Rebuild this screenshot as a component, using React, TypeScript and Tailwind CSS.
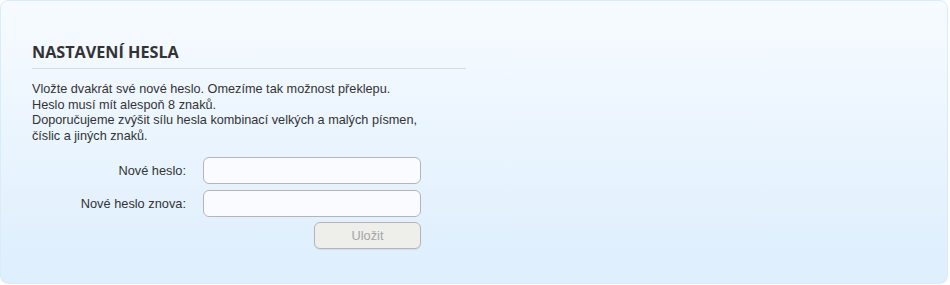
import React from "react";

const Field = ({ label }: { label: string }) => (
  <>
    <label className="self-center text-right text-[12.8px] text-[#333]">{label}</label>
    <input
      type="password"
      className="h-[27px] w-[218px] rounded-[6px] border border-[#b5b5b5] bg-[#f9fbff] px-2 text-[12px] outline-none"
    />
  </>
);

export default function App() {
  return (
    <div className="h-[285px] w-[950px] bg-white" style={{ fontFamily: '"Liberation Sans", Arial, sans-serif' }}>
      <div className="h-[284px] w-[948px] rounded-[8px] border border-[#d9ecfc] bg-gradient-to-b from-[#f7fbff] to-[#ddeefd] pl-[31px] pt-[40px]">
        <div className="w-[434px]">
          <h2
            className="border-b border-[#d9dbdd] pb-[5px] text-[16.2px] font-bold leading-[22px] text-[#333]"
            style={{ fontFamily: '"Open Sans", sans-serif' }}
          >
            NASTAVENÍ HESLA
          </h2>
          <p className="mt-[13px] text-[12.7px] leading-[15.5px] text-[#333]">
            Vložte dvakrát své nové heslo. Omezíme tak možnost překlepu.
            <br />
            Heslo musí mít alespoň 8 znaků.
            <br />
            Doporučujeme zvýšit sílu hesla kombinací velkých a malých písmen,
            <br />
            číslic a jiných znaků.
          </p>
        </div>
        <div className="mt-[13px] grid grid-cols-[154px_218px] gap-x-[17px] gap-y-[6px]">
          <Field label="Nové heslo:" />
          <Field label="Nové heslo znova:" />
          <div />
          <div className="flex justify-end">
            <button
              disabled
              className="mt-[-1px] h-[27px] w-[107px] rounded-[6px] border border-[#b5b5b5] bg-[#eeefeb] text-[12.8px] text-[#a5a5a5] shadow-[0_1px_1px_rgba(0,0,0,0.08)]"
            >
              Uložit
            </button>
          </div>
        </div>
      </div>
    </div>
  );
}
